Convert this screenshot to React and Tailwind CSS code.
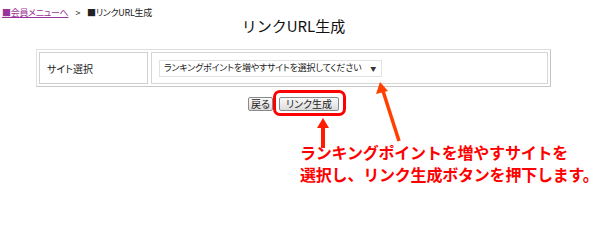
import React from "react";

const jp = "font-['Noto_Sans_CJK_JP','Noto_Sans',sans-serif]";
const palt = "[font-feature-settings:'palt']";

const Button = ({ children, className = "" }) => (
  <button
    className={`h-[14px] rounded-[2px] border border-[#8a8a8a] bg-gradient-to-b from-[#fafafa] to-[#dcdcdc] text-[10px] leading-[12px] text-[#222] whitespace-nowrap flex items-center justify-center ${palt} ${className}`}
  >
    {children}
  </button>
);

const Arrows = () => (
  <svg className="absolute left-0 top-0 pointer-events-none" width="608" height="201">
    {/* arrow to the link button */}
    <line x1="323" y1="148" x2="323" y2="126" stroke="#ff1a00" strokeWidth="4" />
    <polygon points="323,118 317,128 329,128" fill="#ff1a00" />
    {/* arrow to the select box */}
    <line x1="399" y1="141" x2="383" y2="91" stroke="#ff4000" strokeWidth="3.5" />
    <polygon points="380,82 376,94 388,91" fill="#ff4000" />
  </svg>
);

export default function App() {
  return (
    <div className={`relative w-[608px] h-[201px] overflow-hidden bg-white text-[#222] ${jp}`}>
      <div className={`h-[17px] pt-[8px] pl-[2px] text-[9px] leading-[10px] tracking-[-0.3px] flex gap-[7px] ${palt}`}>
        <a className="text-[#993399] underline underline-offset-[1px]">■会員メニューへ</a>
        <span>&gt;</span>
        <span>■リンクURL生成</span>
      </div>

      <div className="ml-[36px] w-[515px]">
        <h1 className="text-center text-[15px] leading-[17px] text-[#111]">リンクURL生成</h1>

        <div className="mt-[15px] flex gap-[3px] p-[2px] border border-[#dedede] border-r-[#c4c4c4] border-b-[#c8c8c8] border-b-dotted">
          <div className={`w-[109px] h-[32px] border border-[#cfcfcf] flex items-center pl-[7px] text-[10px] ${palt}`}>
            サイト選択
          </div>
          <div className="w-[397px] h-[32px] border border-[#d6d6d6] flex items-center pl-[7px]">
            <div className={`h-[17px] w-[223px] border border-[#e2e2e2] flex items-center pl-[4px] pr-[5px] text-[9px] tracking-[-0.2px] text-[#222] whitespace-nowrap ${palt}`}>
              <span className="flex-1">ランキングポイントを増やすサイトを選択してください</span>
              <span className="text-[6px] text-[#333]">▼</span>
            </div>
          </div>
        </div>

        <div className="mt-[10px] flex justify-center gap-[6px]">
          <Button className="w-[25px]">戻る</Button>
          <Button className="w-[60px]">リンク生成</Button>
        </div>
      </div>

      {/* annotations */}
      <div className="absolute left-[273px] top-[90px] w-[73px] h-[26px] border-[3px] border-[#ff0000] rounded-[7px]" />
      <Arrows />
      <div className="absolute left-[300px] top-[141px] text-[16px] leading-[22px] font-bold text-[#ff0000] tracking-[-0.2px] whitespace-nowrap">
        <div>ランキングポイントを増やすサイトを</div>
        <div>選択し、リンク生成ボタンを押下します。</div>
      </div>
    </div>
  );
}
